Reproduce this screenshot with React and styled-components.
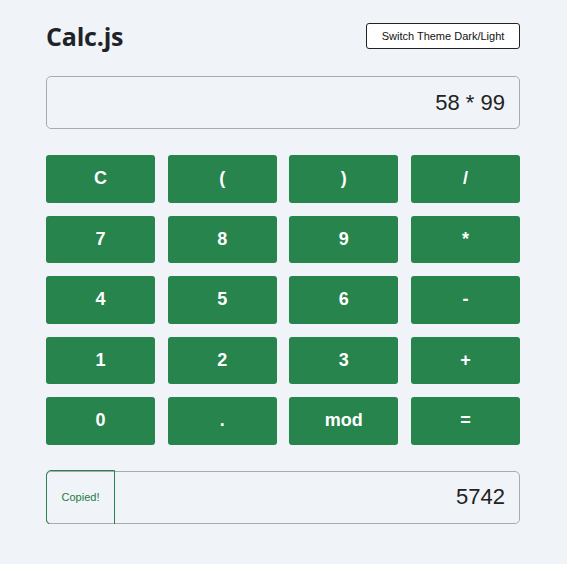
import React from "react";
import styled, { createGlobalStyle } from "styled-components";

const Global = createGlobalStyle`
  html, body { margin: 0; padding: 0; background: #f0f4f8; }
  body { font-family: "Liberation Sans", Arial, sans-serif; }
`;

const Page = styled.div`
  width: 474px;
  margin: 0 0 0 46px;
  padding-top: 22px;
  box-sizing: border-box;
`;

const Header = styled.header`
  display: flex;
  align-items: center;
  justify-content: space-between;
  height: 28px;
`;

const Title = styled.h1`
  margin: 0;
  font-family: "Open Sans", "Noto Sans", sans-serif;
  font-weight: 700;
  font-size: 25px;
  color: #1f2329;
  letter-spacing: -0.2px;
`;

const ThemeButton = styled.button`
  font-family: "Liberation Sans", Arial, sans-serif;
  font-size: 11px;
  color: #111;
  background: #fff;
  border: 1px solid #222;
  border-radius: 3px;
  height: 26px;
  width: 154px;
  padding: 0;
`;

const Display = styled.div`
  margin-top: 26px;
  height: 53px;
  box-sizing: border-box;
  border: 1px solid #a9abae;
  border-radius: 5px;
  display: flex;
  align-items: center;
  justify-content: flex-end;
  padding-right: 14px;
  font-size: 22px;
  color: #222;
`;

const Keys = styled.div`
  margin-top: 26px;
  display: grid;
  grid-template-columns: repeat(4, 1fr);
  column-gap: 12.6px;
  row-gap: 13px;
`;

const Key = styled.button`
  height: 47.5px;
  border: none;
  border-radius: 3px;
  background: #26844c;
  color: #fff;
  font-family: "Liberation Sans", Arial, sans-serif;
  font-weight: 700;
  font-size: 18px;
  padding: 0;
`;

const Result = styled.div`
  margin-top: 26px;
  height: 53px;
  box-sizing: border-box;
  border: 1px solid #a9abae;
  border-radius: 5px;
  display: flex;
  align-items: center;
  justify-content: space-between;
  font-size: 22px;
  color: #222;
`;

const CopyButton = styled.button`
  align-self: stretch;
  margin: -2px 0 -2px -1px;
  width: 69px;
  background: transparent;
  border: 1px solid #26844c;
  border-radius: 5px 0 0 5px;
  color: #1f7a45;
  font-family: "Liberation Sans", Arial, sans-serif;
  font-size: 11px;
  padding: 0;
`;

const Value = styled.span`
  padding-right: 14px;
`;

const keys = ["C", "(", ")", "/", "7", "8", "9", "*", "4", "5", "6", "-", "1", "2", "3", "+", "0", ".", "mod", "="];

export default function App() {
  return (
    <>
      <Global />
      <Page>
        <Header>
          <Title>Calc.js</Title>
          <ThemeButton>Switch Theme Dark/Light</ThemeButton>
        </Header>
        <Display>58 * 99</Display>
        <Keys>
          {keys.map((k) => (
            <Key key={k}>{k}</Key>
          ))}
        </Keys>
        <Result>
          <CopyButton>Copied!</CopyButton>
          <Value>5742</Value>
        </Result>
      </Page>
    </>
  );
}
